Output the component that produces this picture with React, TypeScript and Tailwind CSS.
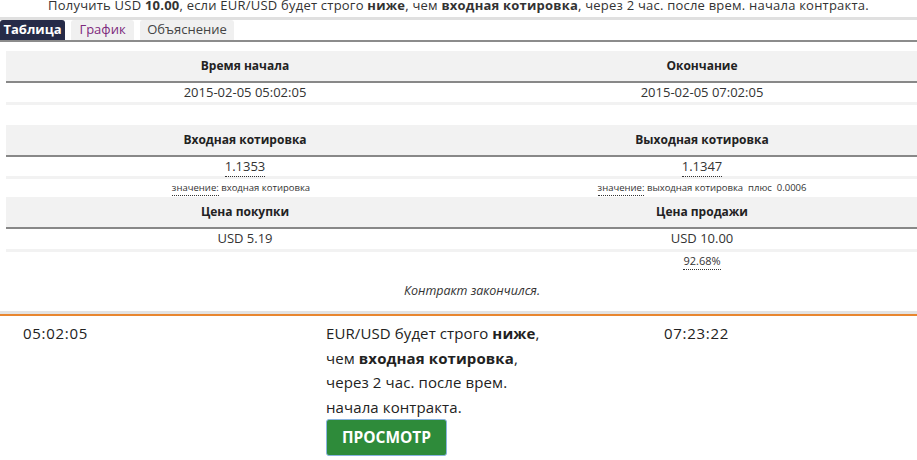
const font = { fontFamily: '"Open Sans", "Liberation Sans", sans-serif' };

function Dotted({ children }: { children: React.ReactNode }) {
  return <span className="border-b border-dotted border-[#333] pb-[1px]">{children}</span>;
}

function HeaderRow({ left, right }: { left: string; right: string }) {
  return (
    <div className="grid h-[32px] grid-cols-[478px_436px] items-center border-b-[2px] border-[#888] bg-[#f2f2f2] text-[12px] font-bold text-[#222]">
      <div className="text-center">{left}</div>
      <div className="text-center">{right}</div>
    </div>
  );
}

function ValueRow({ left, right, h = "h-[19px]" }: { left: React.ReactNode; right: React.ReactNode; h?: string }) {
  return (
    <div className={`grid grid-cols-[478px_436px] items-center text-[13px] ${h}`}>
      <div className="text-center">{left}</div>
      <div className="text-center">{right}</div>
    </div>
  );
}

const Band = () => <div className="h-[3px] bg-[#f2f2f2]" />;

export default function App() {
  return (
    <div className="h-[460px] w-[917px] overflow-hidden bg-white text-[#333]" style={font}>
      <p className="h-[17px] text-center text-[13px] leading-[11px] tracking-[0.22px]">
        Получить USD <b>10.00</b>, если EUR/USD будет строго <b>ниже</b>, чем <b>входная котировка</b>, через 2 час. после врем. начала контракта.
      </p>
      <div className="h-[3px] bg-[#e0e0e0]" />
      <div className="flex h-[20px] gap-[6px] text-[13px]">
        <div className="flex w-[65px] items-center justify-center rounded-t-[3px] bg-[#262b48] font-bold text-white">Таблица</div>
        <div className="flex w-[63px] items-center justify-center rounded-t-[3px] bg-[#f0f0f0] text-[#7d2a7d]">График</div>
        <div className="flex w-[94px] items-center justify-center rounded-t-[3px] bg-[#f0f0f0] text-[#444]">Объяснение</div>
      </div>
      <div className="h-[2px] bg-[#8c8c8c]" />

      <div className="ml-[6px] w-[932px]">
        <div className="mt-[9px]">
          <HeaderRow left="Время начала" right="Окончание" />
          <ValueRow left="2015-02-05 05:02:05" right="2015-02-05 07:02:05" />
          <Band />
        </div>

        <div className="mt-[20px]">
          <HeaderRow left="Входная котировка" right="Выходная котировка" />
          <ValueRow left={<Dotted>1.1353</Dotted>} right={<Dotted>1.1347</Dotted>} />
          <Band />
          <div className="grid h-[18px] grid-cols-[478px_436px] items-center text-[9.5px]">
            <div className="pr-[8px] text-center">
              <Dotted>значение:</Dotted> входная котировка
            </div>
            <div className="text-center">
              <Dotted>значение:</Dotted> выходная котировка&nbsp; плюс&nbsp; 0.0006
            </div>
          </div>
          <HeaderRow left="Цена покупки" right="Цена продажи" />
          <ValueRow left="USD 5.19" right="USD 10.00" h="h-[20px]" />
          <Band />
          <div className="grid h-[19px] grid-cols-[478px_436px] items-center text-[11px]">
            <div />
            <div className="text-center">
              <Dotted>92.68%</Dotted>
            </div>
          </div>
          <div className="flex h-[40px] items-center justify-center text-[12.5px] italic">Контракт закончился.</div>
        </div>
      </div>

      <div className="h-[3px] bg-[#e3e3e3]" />
      <div className="h-[2px] bg-[#e8862f]" />

      <div className="flex pl-[23px] pt-[5px] text-[15px] leading-[24.5px] text-[#222]">
        <div className="w-[303px] tracking-[0.7px]">05:02:05</div>
        <div className="w-[338px]">
          <p className="tracking-[0.1px]">
            EUR/USD будет строго <b>ниже</b>,<br />
            чем <b>входная котировка</b>,<br />
            через 2 час. после врем.<br />
            начала контракта.
          </p>
          <button className="flex h-[37px] w-[121px] items-center justify-center rounded-[3px] border border-[#8ab4e0] bg-[#2e8b3a] text-[15.5px] font-bold text-white">
            ПРОСМОТР
          </button>
        </div>
        <div className="tracking-[0.7px]">07:23:22</div>
      </div>
    </div>
  );
}
